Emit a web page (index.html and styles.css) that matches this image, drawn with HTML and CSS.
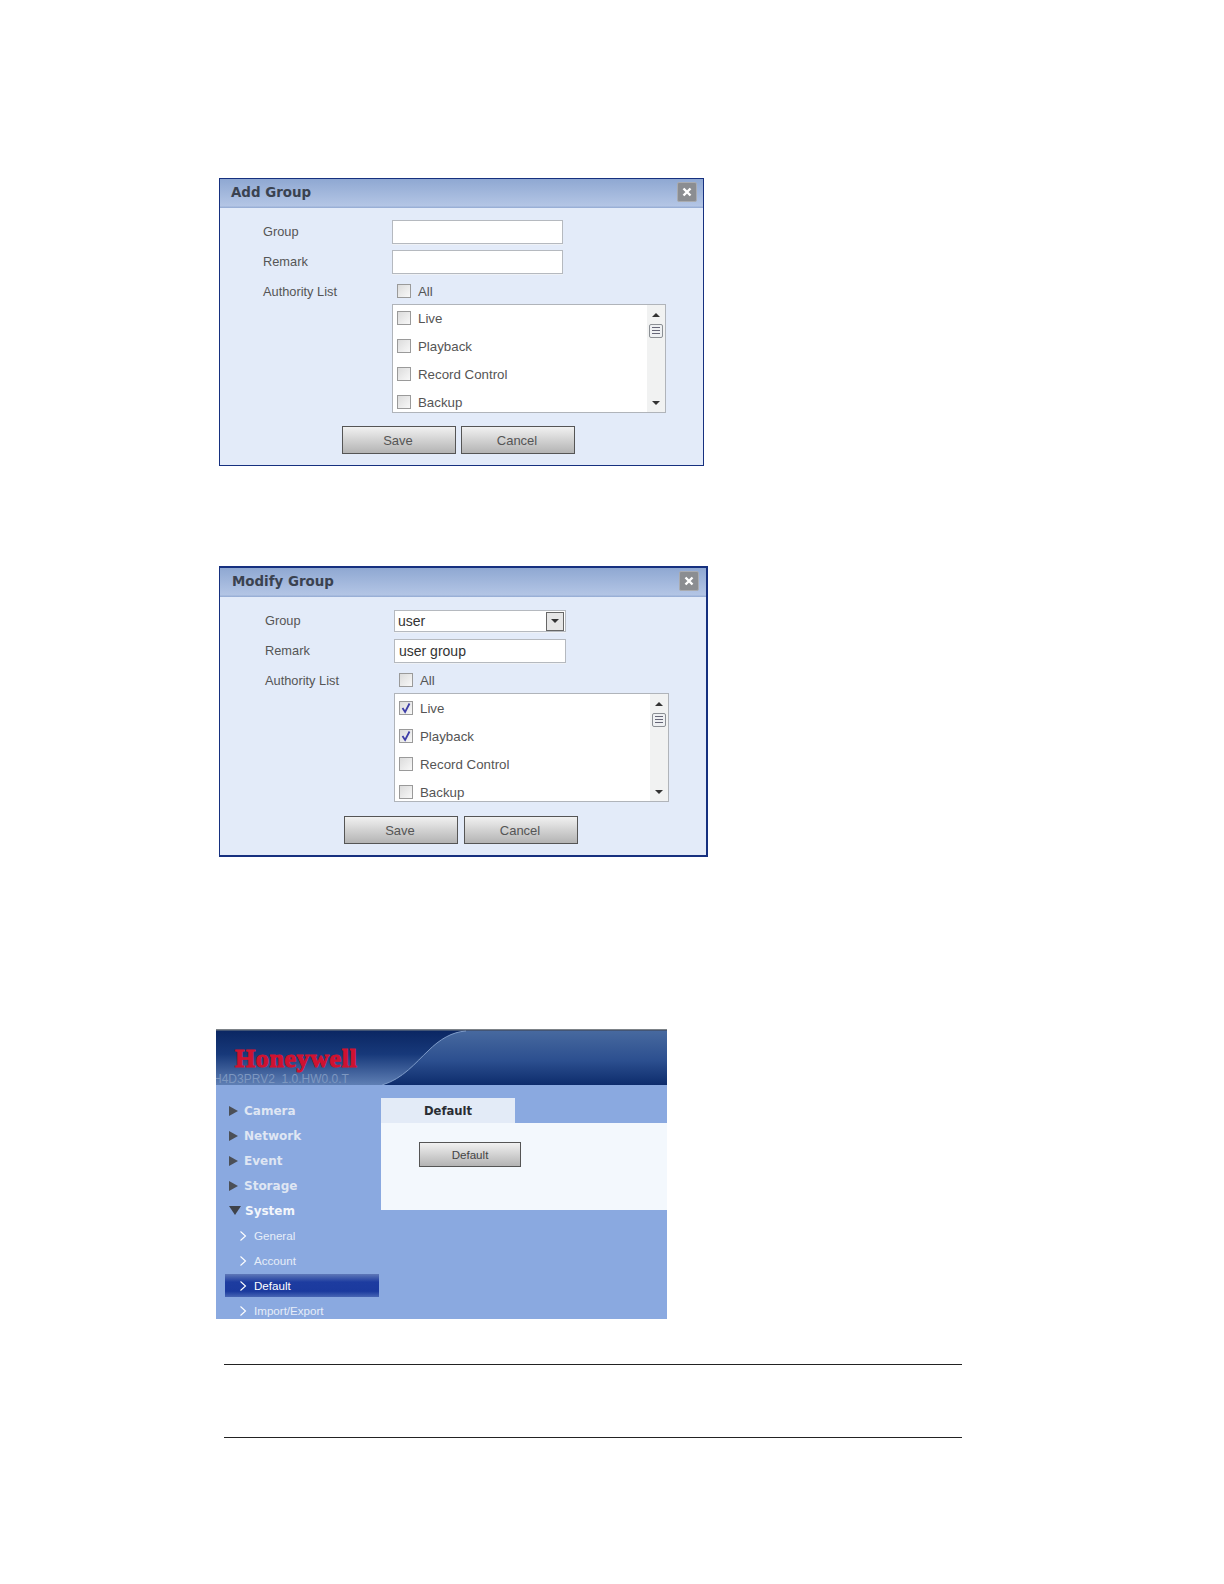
FILE: index.html
```html
<!DOCTYPE html>
<html lang="en">
<head>
<meta charset="utf-8">
<title>Group settings</title>
<link rel="stylesheet" href="styles.css">
</head>
<body>
<section class="dialog dialog-add">
  <header class="dlg-title"><h2>Add Group</h2><span class="close"><svg viewBox="0 0 12 12" width="12" height="12"><path d="M2.5 2.5l7 7M9.5 2.5l-7 7" stroke="#fff" stroke-width="2.4" fill="none"/></svg></span></header>
  <div class="dlg-body">
    <div class="row"><span class="label">Group</span><div class="input"></div></div>
    <div class="row"><span class="label">Remark</span><div class="input"></div></div>
    <div class="row row-all"><span class="label">Authority List</span><div class="check-line"><span class="check"></span><span>All</span></div></div>
    <div class="list">
      <div class="items">
        <div class="check-line"><span class="check"></span><span>Live</span></div>
        <div class="check-line"><span class="check"></span><span>Playback</span></div>
        <div class="check-line"><span class="check"></span><span>Record Control</span></div>
        <div class="check-line"><span class="check"></span><span>Backup</span></div>
      </div>
      <div class="scroll"><i class="up"></i><span class="thumb"><b></b><b></b><b></b></span><i class="down"></i></div>
    </div>
    <div class="buttons"><span class="btn">Save</span><span class="btn">Cancel</span></div>
  </div>
</section>

<section class="dialog dialog-mod">
  <header class="dlg-title"><h2>Modify Group</h2><span class="close"><svg viewBox="0 0 12 12" width="12" height="12"><path d="M2.5 2.5l7 7M9.5 2.5l-7 7" stroke="#fff" stroke-width="2.4" fill="none"/></svg></span></header>
  <div class="dlg-body">
    <div class="row row-select"><span class="label">Group</span><div class="input select"><span>user</span><span class="drop"><i class="down"></i></span></div></div>
    <div class="row"><span class="label">Remark</span><div class="input"><span>user group</span></div></div>
    <div class="row row-all"><span class="label">Authority List</span><div class="check-line"><span class="check"></span><span>All</span></div></div>
    <div class="list">
      <div class="items">
        <div class="check-line"><span class="check"><svg viewBox="0 0 14 14" width="14" height="14"><path d="M3.5 7l2.6 4L10.5 2.5" stroke="#3f3fa8" stroke-width="1.8" fill="none"/></svg></span><span>Live</span></div>
        <div class="check-line"><span class="check"><svg viewBox="0 0 14 14" width="14" height="14"><path d="M3.5 7l2.6 4L10.5 2.5" stroke="#3f3fa8" stroke-width="1.8" fill="none"/></svg></span><span>Playback</span></div>
        <div class="check-line"><span class="check"></span><span>Record Control</span></div>
        <div class="check-line"><span class="check"></span><span>Backup</span></div>
      </div>
      <div class="scroll"><i class="up"></i><span class="thumb"><b></b><b></b><b></b></span><i class="down"></i></div>
    </div>
    <div class="buttons"><span class="btn">Save</span><span class="btn">Cancel</span></div>
  </div>
</section>

<section class="app">
  <header class="app-head">
    <svg class="head-art" viewBox="0 0 451 56" preserveAspectRatio="none">
      <defs>
        <linearGradient id="hl" x1="0" y1="0" x2="0" y2="1"><stop offset="0" stop-color="#0a2561"/><stop offset=".45" stop-color="#17397a"/><stop offset="1" stop-color="#5f7fb4"/></linearGradient>
        <linearGradient id="hr" x1="0" y1="0" x2="0" y2="1"><stop offset="0" stop-color="#47699f"/><stop offset=".55" stop-color="#2c4f8f"/><stop offset="1" stop-color="#0d2c6c"/></linearGradient>
      </defs>
      <rect width="451" height="56" fill="url(#hl)"/>
      <path d="M166 56C187 50 200 33 212 22C224 10 236 3 250 2H451V56Z" fill="url(#hr)"/>
      <path d="M166 56C187 50 200 33 212 22C224 10 236 3 250 2" fill="none" stroke="#7f9cc9" stroke-width="1"/>
      <rect width="451" height="1.5" fill="#7d8388"/>
    </svg>
    <div class="brand">Honeywell</div>
    <div class="version">H4D3PRV2 &nbsp;1.0.HW0.0.T</div>
  </header>
  <div class="app-body">
    <nav class="menu">
      <div class="top"><i class="arrow"></i>Camera</div>
      <div class="top"><i class="arrow"></i>Network</div>
      <div class="top"><i class="arrow"></i>Event</div>
      <div class="top"><i class="arrow"></i>Storage</div>
      <div class="top open"><i class="arrow-down"></i>System</div>
      <div class="sub"><svg viewBox="0 0 8 12" width="8" height="12"><path d="M1.5 1.5L6.5 6L1.5 10.5" stroke="#fff" stroke-width="1.1" fill="none"/></svg>General</div>
      <div class="sub"><svg viewBox="0 0 8 12" width="8" height="12"><path d="M1.5 1.5L6.5 6L1.5 10.5" stroke="#fff" stroke-width="1.1" fill="none"/></svg>Account</div>
      <div class="sub active"><svg viewBox="0 0 8 12" width="8" height="12"><path d="M1.5 1.5L6.5 6L1.5 10.5" stroke="#fff" stroke-width="1.1" fill="none"/></svg>Default</div>
      <div class="sub"><svg viewBox="0 0 8 12" width="8" height="12"><path d="M1.5 1.5L6.5 6L1.5 10.5" stroke="#fff" stroke-width="1.1" fill="none"/></svg>Import/Export</div>
    </nav>
    <main class="main">
      <div class="tab">Default</div>
      <div class="panel"><span class="btn btn-default">Default</span></div>
    </main>
  </div>
</section>

<hr class="rule rule-a">
<hr class="rule rule-b">
</body>
</html>
```
FILE: styles.css
```css
* { box-sizing: border-box; }
html, body { margin: 0; padding: 0; }
body { width: 1224px; height: 1584px; background: #fff; overflow: hidden; font-family: "Liberation Sans", Arial, sans-serif; color: #555; }

.dialog { margin-left: 219px; background: #e3ebf9; border: 1px solid #16307f; }
.dialog-add { width: 485px; height: 288px; margin-top: 178px; }
.dialog-mod { width: 489px; height: 291px; margin-top: 100px; border-width: 2px 2px 2px 1.5px; }

.dlg-title { height: 29px; display: flex; align-items: center; justify-content: space-between; padding: 0 6px 2px 11px; background: linear-gradient(#8fa8d2, #b3c5e5 92%, #92a9d2); }
.dlg-title h2 { margin: 0; font: bold 13.4px "DejaVu Sans", sans-serif; color: #3a4250; }
.close { width: 20px; height: 20px; margin-top: -2px; background: #8b8d91; border: 1px solid #a9abb0; border-radius: 2px; display: flex; align-items: center; justify-content: center; }

.dlg-body { padding: 12px 0 0 43px; font-size: 13.3px; }
.row { display: flex; align-items: center; height: 24px; margin-bottom: 6px; }
.label { width: 129px; flex: none; padding-bottom: 2px; font-size: 12.8px; }
.input { width: 171px; height: 24px; background: #fff; border: 1px solid #b5b9bf; box-shadow: 0 1px 0 #eef1f6; display: flex; align-items: center; padding-left: 4px; color: #333; font-size: 14px; }
.select { justify-content: space-between; padding: 0 1px 0 3px; height: 22px; }
.row-select { height: 22px; margin-bottom: 7px; }
.drop { width: 18px; height: 19px; background: #e6e6e6; border: 1px solid #666; display: flex; align-items: center; justify-content: center; }
.row-all { height: 14px; margin: 10px 0 6px; }
.row-all .label { padding-bottom: 0; }
.row-all .check-line { height: 14px; }

.check-line { display: flex; align-items: center; height: 28px; padding-left: 5px; gap: 7px; }
.items .check-line { padding-left: 4px; }
.check { width: 14px; height: 14px; flex: none; display: block; background: linear-gradient(135deg, #dcdcdc, #f8f8f8); border: 1px solid #9a9a9a; position: relative; }
.check svg { display: block; margin: -1px; }

.list { width: 274px; height: 109px; margin-left: 129px; display: flex; justify-content: space-between; background: #fff; border: 1px solid #b0b4ba; overflow: hidden; }
.dialog-add .items { margin-top: -1px; }
.scroll { width: 18px; flex: none; background: #f1f2f2; display: flex; flex-direction: column; align-items: center; padding-top: 8px; }
.up, .down { display: block; width: 0; height: 0; border-left: 4px solid transparent; border-right: 4px solid transparent; }
.up { border-bottom: 4px solid #333; }
.down { border-top: 4px solid #333; }
.scroll .down { margin-top: 63px; }
.thumb { width: 14px; height: 14px; margin-top: 7px; background: #eef0f2; border: 1px solid #8b8f94; border-radius: 2px; display: flex; flex-direction: column; gap: 2px; padding: 2px; }
.thumb b { display: block; height: 1px; background: #667; }

.buttons { display: flex; gap: 5px; margin: 13px 0 0 79px; }
.btn { width: 114px; height: 28px; display: flex; align-items: center; justify-content: center; padding-right: 2px; border: 1px solid #555; background: linear-gradient(#f1f1f1, #cfcfcf 55%, #b4b4b4); font-size: 13px; color: #555; }

.dialog-mod .dlg-title { padding-left: 12px; padding-right: 7px; }
.dialog-mod .dlg-body { padding: 13px 0 0 45px; }
.dialog-mod .input { width: 172px; }
.dialog-mod .list { width: 275px; }
.dialog-mod .buttons { gap: 6px; margin: 14px 0 0 79px; }

.app { width: 451px; height: 290px; margin: 172px 0 0 216px; background: #8aa9e0; overflow: hidden; }
.app-head { height: 56px; position: relative; padding: 17px 0 0 19px; overflow: hidden; }
.head-art { position: absolute; left: 0; top: 0; width: 100%; height: 100%; }
.brand { position: relative; font: bold 26px/26px "Liberation Serif", serif; color: #cf1230; -webkit-text-stroke: 1.1px #cf1230; letter-spacing: .6px; }
.version { position: relative; margin: 1px 0 0 -22px; font-size: 12px; line-height: 12px; color: #7d97c0; white-space: nowrap; }

.app-body { display: flex; }
.menu { width: 165px; flex: none; padding: 13px 0 0 9px; }
.top, .sub { height: 25px; display: flex; align-items: center; white-space: nowrap; }
.top { padding-left: 4px; font: bold 12px "DejaVu Sans", sans-serif; color: #dfe6f3; }
.arrow { width: 0; height: 0; margin-right: 6px; border-left: 9px solid #4b4f57; border-top: 5px solid transparent; border-bottom: 5px solid transparent; }
.arrow-down { width: 0; height: 0; margin-right: 4px; border-top: 9px solid #3f434b; border-left: 6px solid transparent; border-right: 6px solid transparent; }
.open { color: #f3f6fb; }
.sub { width: 154px; padding-left: 14px; gap: 7px; font-size: 11.6px; color: #e6edf8; }
.sub svg { flex: none; }
.active { height: 23px; margin: 1px 0; color: #fff; background: linear-gradient(#5f78b8, #1d3ca0 35%, #1b3a9e 75%, #4765b4); }

.main { flex: 1; padding-top: 13px; }
.tab { width: 134px; height: 25px; display: flex; align-items: center; justify-content: center; background: #e3ebf7; font: bold 11.6px "DejaVu Sans", sans-serif; color: #2a2d33; }
.panel { height: 87px; padding: 19px 0 0 38px; background: #f3f8fd; }
.btn-default { width: 102px; height: 25px; padding-right: 0; font-size: 11.6px; color: #444; }

.rule { width: 738px; height: 1px; margin-left: 224px; border: 0; background: #222; }
.rule-a { margin-top: 45px; }
.rule-b { margin-top: 72px; }
```
